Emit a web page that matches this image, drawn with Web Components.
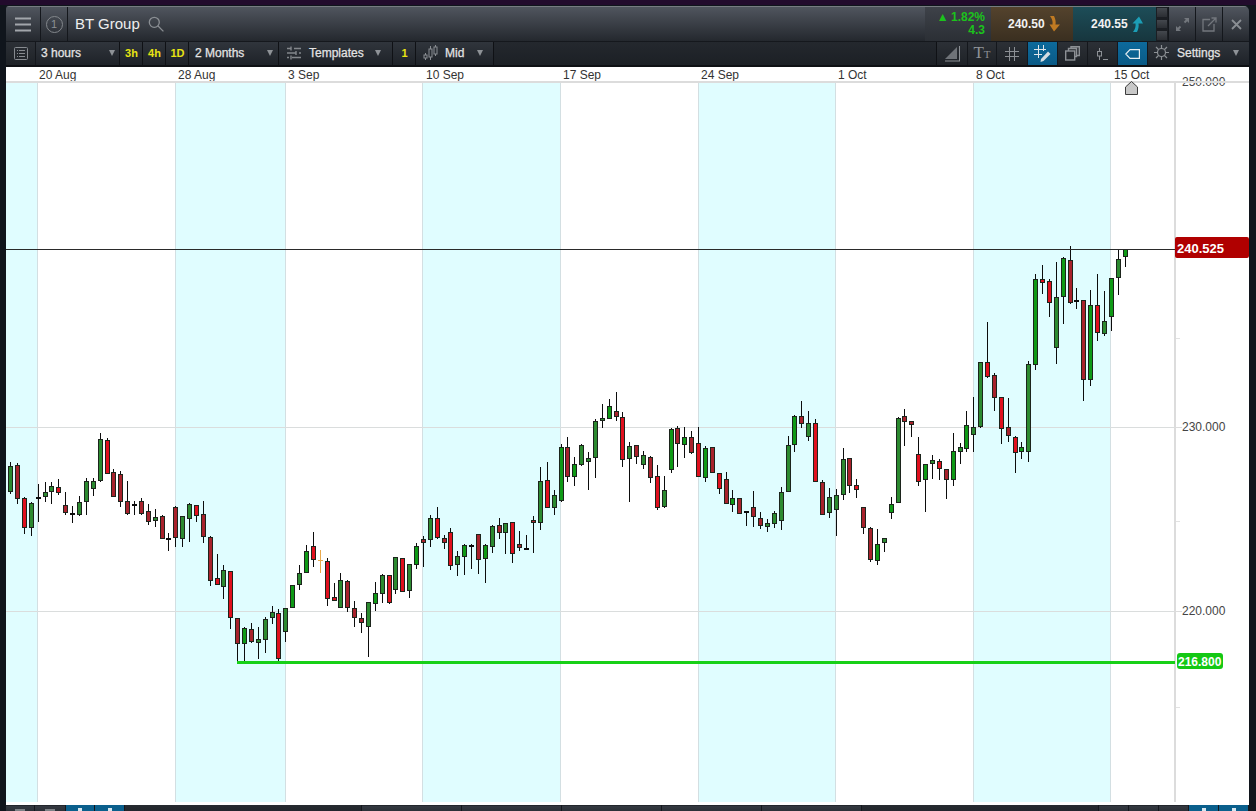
<!DOCTYPE html>
<html>
<head>
<meta charset="utf-8">
<title>BT Group</title>
<style>
  html, body { margin: 0; height: 100%; overflow: hidden; background: #10151c; }
  body { font-family: "Liberation Sans", Arial, sans-serif; display: flex; flex-direction: column; }
  .edge { height: 5px; flex: none; background: #220b2c; }
  chart-window { flex: 1; min-height: 0; }
</style>
</head>
<body>
<div class="edge"></div>
<chart-window>
  <title-bar slot="title" name="BT Group"></title-bar>
  <chart-toolbar slot="tools"></chart-toolbar>
  <candle-chart slot="chart"></candle-chart>
  <status-strip slot="status"></status-strip>
</chart-window>

<script>
class ChartWindow extends HTMLElement {
  constructor() {
    super();
    this.attachShadow({ mode: 'open' });
    this.shadowRoot.innerHTML = `
      <style>
        :host { display: flex; flex-direction: column; margin: 1px 7px 0 6px; overflow: hidden; border-radius: 3px 5px 0 0; }
      </style>
      <slot name="title"></slot>
      <slot name="tools"></slot>
      <slot name="chart"></slot>
      <slot name="status"></slot>
    `;
  }
}

class IconCell extends HTMLElement {
  constructor() {
    super();
    this.attachShadow({ mode: 'open' });
    this.shadowRoot.innerHTML = `
      <style>
        :host {
          display: flex;
          flex: none;
          align-items: center;
          justify-content: center;
          box-sizing: border-box;
          height: 100%;
          width: var(--w, 30px);
          border-right: 1px solid #14171c;
        }
        :host([active]) {
          background: linear-gradient(#0d6a9c, #0a5a86);
        }
      </style>
      <slot></slot>
    `;
  }
}

class TitleBar extends HTMLElement {
  constructor() {
    super();
    this.attachShadow({ mode: 'open' });
  }

  connectedCallback() {
    this.shadowRoot.innerHTML = `
      <style>
        :host {
          display: flex;
          align-items: stretch;
          height: 36px;
          box-sizing: border-box;
          border-top: 1px solid #767b80;
          border-bottom: 1px solid #15181d;
          background: linear-gradient(#50555e, #24282e);
          color: #eee;
        }
        .name { font-size: 15px; margin: 0 0 2px 7px; align-self: center; }
        .search { margin: 0 0 1px 8px; align-self: center; }
        .spacer { flex: 1; }
        .circle {
          width: 17px; height: 17px; border: 1.5px solid #83878c; border-radius: 50%;
          box-sizing: border-box; display: flex; align-items: center; justify-content: center;
          font-size: 11px; color: #8c9095;
        }
        .change {
          width: 66px; box-sizing: border-box; padding: 4px 6px 0 0; text-align: right;
          font-size: 12px; font-weight: 700; line-height: 13px; color: #1cc21c;
          background: linear-gradient(#3e4249, #2b2f35);
        }
        .change i { font-style: normal; font-size: 12px; margin-right: -1px; }
        .quote {
          display: flex; align-items: center; gap: 3px; box-sizing: border-box;
          font-size: 12px; font-weight: 700; color: #f2f2f2;
        }
        .sell { width: 82px; padding-left: 17px; background: linear-gradient(#54432d, #3a2f20); }
        .buy { width: 83px; padding-left: 18px; background: linear-gradient(#1d4d58, #17363e); }
        .grip {
          width: 12px; display: grid; grid-template-rows: repeat(3, 1fr); gap: 1px;
          background: #1b1e23; border-right: 1px solid #14171c;
        }
        .grip b { background: linear-gradient(#44484e, #2b2e33); margin: 1px; }
      </style>
      <icon-cell style="--w:35px">
        <svg width="16" height="15" viewBox="0 0 16 15"><path d="M0 1.500h16M0 7.500h16M0 13.500h16" stroke="#a2a6ab" stroke-width="2"/></svg>
      </icon-cell>
      <icon-cell style="--w:27px"><span class="circle">1</span></icon-cell>
      <span class="name">${this.getAttribute('name')}</span>
      <svg class="search" width="16" height="16" viewBox="0 0 16 16" fill="none" stroke="#8a8e93" stroke-width="1.300">
        <circle cx="6.300" cy="6.300" r="5"/><path d="M9.800 9.800l5.600 5.600"/>
      </svg>
      <span class="spacer"></span>
      <div class="change"><i>▲</i> 1.82%<br>4.3</div>
      <div class="quote sell">240.50
        <svg width="13" height="16" viewBox="0 0 13 16"><path d="M2 0h4c1.500 3 2 6 1.500 8.500H12L6 15.500 1.500 8.500h3C5 5.500 4 2.500 2 0z" fill="#c07a22"/></svg>
      </div>
      <div class="quote buy">240.55
        <svg width="13" height="16" viewBox="0 0 13 16"><path d="M2 16h4c1.500-3 2-6 1.500-8.500H12L8 .5 1.500 7.500h3C5 10.500 4 13.500 2 16z" fill="#1c9eb6"/></svg>
      </div>
      <div class="grip"><b></b><b></b><b></b></div>
      <icon-cell style="--w:27px">
        <svg width="13" height="13" viewBox="0 0 13 13" fill="#73777d"><path d="M8 0h5v5l-1.800-1.800-2 2-1.400-1.400 2-2zM0 8l1.800 1.800 2-2 1.400 1.400-2 2L5 13H0z"/></svg>
      </icon-cell>
      <icon-cell style="--w:27px">
        <svg width="15" height="15" viewBox="0 0 15 15" fill="none" stroke="#73777d" stroke-width="1.300"><path d="M8 2.500H1v11.500h11V7"/><path d="M6 9l7.500-7.500M9.500 1H14v4.500"/></svg>
      </icon-cell>
      <icon-cell style="--w:26px;border:none">
        <svg width="11" height="11" viewBox="0 0 11 11"><path d="M1 1l9 9M10 1l-9 9" stroke="#8a8e93" stroke-width="1.800"/></svg>
      </icon-cell>
    `;
  }
}

class ToolItem extends HTMLElement {
  constructor() {
    super();
    this.attachShadow({ mode: 'open' });
    this.shadowRoot.innerHTML = `
      <style>
        :host {
          display: flex;
          flex: none;
          align-items: center;
          box-sizing: border-box;
          height: 100%;
          width: var(--w, 80px);
          padding: 0 0 2px var(--pad, 5px);
          gap: var(--gap, 7px);
          font-size: 12px;
          color: #e4e4e4;
          -webkit-text-stroke: 0.25px #e4e4e4;
          background: linear-gradient(#30353c, #1e2228);
          border-right: 1px solid #0f1115;
        }
        .arrow {
          margin-left: auto; margin-right: var(--am, 10px);
          width: 0; height: 0;
          border-left: 3.500px solid transparent;
          border-right: 3.500px solid transparent;
          border-top: 6px solid #8e9297;
        }
        :host([plain]) .arrow { display: none; }
      </style>
      <slot></slot>
      <span class="arrow"></span>
    `;
  }
}

class ChartToolbar extends HTMLElement {
  constructor() {
    super();
    this.attachShadow({ mode: 'open' });
    this.shadowRoot.innerHTML = `
      <style>
        :host {
          display: flex;
          align-items: stretch;
          height: 25px;
          box-sizing: border-box;
          border-bottom: 2px solid #0e1014;
          background: linear-gradient(#24282e, #1c2025);
        }
        tool-item.y {
          justify-content: center; padding: 0 0 2px 1px; color: #e8e413;
          font-size: 11px; font-weight: 700; -webkit-text-stroke: 0;
        }
        icon-cell { background: linear-gradient(#2c3036, #1e2227); }
        icon-cell[active] { background: linear-gradient(#0d6a9c, #0a5a86); }
        .spacer { flex: 1; border-right: 1px solid #0f1115; }
        .tt { font-family: "Liberation Serif", serif; color: #8f9398; font-size: 17px; line-height: 1; margin-bottom: 2px; }
        .tt small { font-size: 11px; }
      </style>
      <icon-cell style="--w:30px;background:linear-gradient(#2c3036,#1e2227)">
        <svg width="14" height="14" viewBox="0 0 14 14" fill="none" stroke="#878b90">
          <rect x=".5" y=".5" width="13" height="12" rx="1"/>
          <path d="M3 3.500h1M5 3.500h6M3 6.500h1M5 6.500h6M3 9.500h1M5 9.500h6"/>
        </svg>
      </icon-cell>
      <tool-item style="--w:84px;--am:4px">3 hours</tool-item>
      <tool-item class="y" plain style="--w:23px">3h</tool-item>
      <tool-item class="y" plain style="--w:23px">4h</tool-item>
      <tool-item class="y" plain style="--w:23px">1D</tool-item>
      <tool-item style="--w:90px;--pad:6px;--am:5px">2 Months</tool-item>
      <tool-item style="--w:114px;--pad:8px;--gap:8px;--am:11px">
        <svg width="14" height="14" viewBox="0 0 14 14" stroke="#83878c" stroke-width="1.400" fill="none"><path d="M0 2.500h4M7 2.500h7M4 .5v4M0 7h9M12 7h2M9 5v4M0 11.500h2M5 11.500h9M4 9.500v4"/></svg>
        Templates
      </tool-item>
      <tool-item class="y" plain style="--w:23px">1</tool-item>
      <tool-item style="--w:78px;--pad:7px">
        <svg width="15" height="15" viewBox="0 0 15 15" fill="none" stroke="#8a8e93"><path d="M2.500 8v2M2.500 13v2M7.500 1v3M7.500 12v3M12.500 0v2M12.500 9v2"/><rect x="1" y="10" width="3" height="3"/><rect x="6" y="4" width="3" height="8"/><rect x="11" y="2" width="3" height="7"/></svg>
        <span>Mid</span>
      </tool-item>
      <span class="spacer"></span>
      <icon-cell style="--w:31px">
        <svg width="15" height="16" viewBox="0 0 15 16"><path d="M0 13L12 1v12z" fill="#6f7378"/><path d="M0 15h15M14.500 0v15" stroke="#8c9095" fill="none"/></svg>
      </icon-cell>
      <icon-cell style="--w:29px"><span class="tt">T<small>T</small></span></icon-cell>
      <icon-cell style="--w:31px">
        <svg width="14" height="14" viewBox="0 0 14 14"><path d="M0 4.500h14M0 9.500h14M4.500 0v14M9.500 0v14" stroke="#8c9095"/></svg>
      </icon-cell>
      <icon-cell active style="--w:30px">
        <svg width="18" height="17" viewBox="0 0 18 17"><path d="M0 4.500h12M0 9.500h8M4.500 0v13M9.500 0v6" stroke="#dfe6ea"/><path d="M7 14l-.5 3 3-1 7-7-2.500-2.500z" fill="#d4dde2"/></svg>
      </icon-cell>
      <icon-cell style="--w:30px">
        <svg width="15" height="15" viewBox="0 0 15 15" fill="none" stroke="#8c9095" stroke-width="1.400"><rect x=".7" y="5" width="9" height="9"/><path d="M3.500 5V2.500h8v8H10M6 2.500V.7h8.300v8.800H11.500"/></svg>
      </icon-cell>
      <icon-cell style="--w:30px">
        <svg width="11" height="12" viewBox="0 0 11 12" fill="none" stroke="#8c9095"><path d="M2.500 0v3.500M2.500 8v4M6 11.500h5"/><rect x=".5" y="3.500" width="4" height="4.500"/></svg>
      </icon-cell>
      <icon-cell active style="--w:30px">
        <svg width="15" height="10" viewBox="0 0 15 10" fill="none" stroke="#e6edf1" stroke-width="1.200"><path d="M5 .6h9.400v8.800H5L.8 5z"/></svg>
      </icon-cell>
      <tool-item style="--w:101px;--pad:6px;--gap:8px;border:none">
        <svg width="15" height="15" viewBox="0 0 15 15" fill="none" stroke="#8c9095" stroke-width="1.200"><circle cx="7.500" cy="7.500" r="4"/><path d="M7.500 0v3M7.500 12v3M0 7.500h3M12 7.500h3M2 2l2.500 2.500M10.500 10.500L13 13M2 13l2.500-2.500M10.500 4.500L13 2"/></svg>
        Settings
      </tool-item>
    `;
  }
}

// rows are read off in groups: [wickTop, bodyTop, bodyBottom, wickBottom, colour]
// values are 3x from the group's base y. r/g bright, R/G dull, k doji, o orange
const CANDLE_GROUPS = [
  { base: 420, rows: [
    [126,138,215,222,'G'],[130,136,236,251,'R'],[232,235,323,341,'r'],[245,250,323,347,'G'],
    [192,232,236,305,'k'],[186,217,230,246,'G'],[186,198,215,251,'G'],[178,202,218,224,'r'],
    [216,255,278,284,'R'],[258,280,284,308,'k'],[228,247,285,287,'G'],[175,184,245,284,'G'],
    [175,184,206,228,'G'],[40,58,182,185,'G'],[54,60,161,161,'r'],[148,157,230,230,'R'],
    [154,162,245,260,'R'],[183,244,281,284,'R'],[243,253,257,284,'k'],[235,244,281,284,'R'],
    [252,274,305,315,'R'],[267,292,303,320,'G'],[286,288,356,356,'R'],[339,355,358,392,'k'],
    [258,262,353,381,'R'],[289,289,356,381,'G'],[250,253,296,365,'G'],[255,256,287,305,'r'],
    [243,281,350,368,'R'],[348,352,482,497,'R'],[403,475,494,494,'r'],[435,451,500,536,'G'],
    [454,454,593,626,'r'],[595,595,671,725,'R'],[620,625,673,725,'g'],[610,628,666,668,'R'],
    [622,658,668,718,'G'],[592,598,659,698,'G'],[559,577,593,611,'G'],[568,580,716,722,'r'],
  ] },
  { base: 480, rows: [
    [385,385,455,485,'G'],[315,315,385,385,'g'],[255,280,314,329,'G'],[195,214,278,278,'g'],
    [156,198,239,260,'r'],[210,241,243,279,'o'],[235,244,356,378,'r'],[309,352,362,362,'r'],
    [280,301,383,383,'G'],[300,303,383,395,'R'],[363,385,413,440,'R'],[399,415,428,458,'R'],
    [367,367,440,530,'G'],[306,340,371,392,'g'],[283,286,341,368,'G'],[285,286,369,371,'r'],
    [232,232,329,342,'G'],[233,235,335,335,'r'],[253,253,332,353,'G'],[190,198,254,267,'g'],
    [168,178,188,261,'R'],[106,114,181,200,'G'],[81,114,174,176,'r'],[166,175,188,207,'R'],
    [145,156,257,269,'r'],[213,229,254,287,'G'],[193,196,230,285,'g'],[193,196,199,266,'k'],
    [163,163,241,282,'R'],[193,194,238,308,'g'],[136,139,200,218,'G'],[114,136,160,176,'R'],
    [128,129,160,221,'G'],[127,127,221,248,'r'],[153,193,203,212,'R'],[165,203,206,206,'k'],
    [109,121,128,218,'R'],[-39,3,130,150,'G'],[-54,0,85,85,'r'],
  ] },
  { base: 385, rows: [
    [315,331,368,389,'G'],[178,187,347,350,'g'],[157,187,275,290,'R'],[216,238,275,302,'g'],
    [178,181,239,242,'G'],[201,220,230,314,'G'],[103,109,218,278,'G'],[57,100,107,128,'G'],
    [42,64,101,101,'g'],[21,79,95,107,'R'],[82,97,224,245,'r'],[172,184,221,350,'G'],
    [181,181,215,236,'R'],[198,211,239,251,'G'],[214,216,278,293,'R'],[240,274,369,374,'r'],
    [273,316,366,368,'G'],[129,132,254,263,'g'],[124,130,176,245,'R'],[126,157,179,219,'g'],
    [138,157,204,206,'R'],[126,175,275,277,'r'],[183,190,278,290,'g'],[185,187,263,263,'R'],
    [265,265,311,326,'r'],[262,283,356,356,'R'],[315,339,359,380,'g'],[340,340,386,388,'R'],
    [377,379,382,423,'k'],[319,367,397,425,'R'],[381,400,422,431,'R'],[403,415,425,440,'G'],
    [379,385,418,429,'G'],[307,322,409,434,'G'],[153,181,320,320,'G'],[91,93,181,200,'g'],
    [48,94,118,128,'R'],[79,115,157,169,'G'],[103,115,290,290,'r'],[286,292,389,389,'R'],
    [310,337,383,398,'G'],
  ] },
  { base: 390, rows: [
    [298,316,361,437,'G'],[175,208,314,329,'G'],[205,205,287,308,'R'],[267,286,299,323,'r'],
    [352,352,413,431,'R'],[411,414,509,517,'R'],[417,463,512,524,'g'],[444,445,460,486,'G'],
    [321,343,368,386,'g'],[82,85,340,340,'G'],[57,79,95,167,'R'],[93,94,104,140,'R'],
    [141,193,275,287,'r'],[223,223,271,365,'g'],[195,211,221,266,'G'],[207,214,236,269,'r'],
    [238,238,269,326,'R'],[129,184,271,287,'g'],[159,172,185,221,'G'],[64,106,176,185,'g'],
    [21,112,134,185,'G'],
  ] },
  { base: 235, rows: [
    [380,380,577,580,'G'],[262,381,427,430,'r'],[415,421,490,527,'R'],[487,487,581,627,'r'],
    [490,576,602,620,'R'],[603,606,653,713,'r'],[621,637,650,671,'g'],[379,388,650,681,'G'],
    [118,133,391,404,'g'],[90,133,143,176,'r'],[133,138,203,245,'r'],[82,187,338,386,'G'],
    [65,69,185,266,'g'],[34,76,203,208,'R'],[160,196,200,223,'k'],[196,196,434,497,'R'],
    [166,211,434,452,'g'],[117,211,293,317,'r'],[168,259,296,302,'G'],[128,130,245,287,'g'],
    [44,73,130,179,'G'],[42,42,67,95,'g'],
  ] },
];

const CANDLE_COLOURS = { r: '#e0101e', R: '#a8222c', g: '#0f9a16', G: '#2c8a30' };

class CandleChart extends HTMLElement {
  constructor() {
    super();
    this.attachShadow({ mode: 'open' });
  }

  candles() {
    let out = '';
    let i = 0;
    CANDLE_GROUPS.forEach(({ base, rows }) => {
      const py = (v) => Math.round(base + v / 3);
      rows.forEach(([wt, bt, bb, wb, col]) => {
        const x = Math.round(10.2 + 6.879 * i);
        i++;
        const wick = col === 'o' ? '#e9a94c' : '#0c0c0c';
        out += `<rect x="${x}" y="${py(wt)}" width="1" height="${py(wb) - py(wt)}" fill="${wick}"/>`;
        if (col === 'k' || col === 'o') {
          out += `<rect x="${x - 2}" y="${py(bt)}" width="5" height="${col === 'k' ? 2 : 1}" fill="${wick}"/>`;
        } else {
          const h = Math.max(py(bb) - py(bt), 3);
          out += `<rect x="${x - 2}" y="${py(bt)}" width="5" height="${h}" fill="#1c241c"/>`;
          out += `<rect x="${x - 1}" y="${py(bt) + 1}" width="3" height="${h - 2}" fill="${CANDLE_COLOURS[col]}"/>`;
        }
      });
    });
    return out;
  }

  connectedCallback() {
    const bands = [[6, 37], [175, 285], [422, 560], [698, 835], [973, 1110]];
    const weeks = [37, 175, 285, 422, 560, 698, 835, 973, 1110];
    const dates = [[39, '20 Aug'], [178, '28 Aug'], [288, '3 Sep'], [426, '10 Sep'], [563, '17 Sep'],
      [701, '24 Sep'], [838, '1 Oct'], [976, '8 Oct'], [1114, '15 Oct']];
    const prices = [[86, '250.000'], [431, '230.000'], [615, '220.000']];
    this.shadowRoot.innerHTML = `
      <style>
        :host { display: block; height: 738px; background: #fff; }
        svg { display: block; font-family: "Liberation Sans", Arial, sans-serif; font-size: 12px; }
        .lines rect { shape-rendering: crispEdges; }
        .candles { shape-rendering: crispEdges; }
      </style>
      <svg width="1243" height="738" viewBox="6 67 1243 738">
        <g class="lines">
          ${bands.map(([a, b]) => `<rect x="${a}" y="82" width="${b - a}" height="720" fill="#e0fdff"/>`).join('')}
          ${weeks.map((x) => `<rect x="${x}" y="82" width="1" height="720" fill="#d3dfe2"/>`).join('')}
          <rect x="6" y="427" width="1169" height="1" fill="#dadddd"/>
          <rect x="6" y="611" width="1169" height="1" fill="#dadddd"/>
          <rect x="1174" y="82" width="2" height="720" fill="#dcdcdc"/>
          <rect x="1176" y="338" width="4" height="1" fill="#e2e2e2"/>
          <rect x="1176" y="521" width="4" height="1" fill="#e2e2e2"/>
          <rect x="1176" y="707" width="4" height="1" fill="#e2e2e2"/>
          <rect x="1176" y="427" width="6" height="1" fill="#dcdcdc"/>
          <rect x="1176" y="611" width="6" height="1" fill="#dcdcdc"/>
        </g>
        ${dates.map(([x, t]) => `<text x="${x}" y="79" fill="#333">${t}</text>`).join('')}
        ${prices.map(([y, t]) => `<text x="1182" y="${y}" fill="#444">${t}</text>`).join('')}
        <rect x="6" y="81" width="1243" height="2" fill="#dcdcdc" shape-rendering="crispEdges"/>
        <path d="M1125.500 94.500v-7.500l6-5.500 6 5.500v7.500z" fill="#c8c8c8" stroke="#3c3c3c"/>
        <g class="candles">${this.candles()}</g>
        <rect x="6" y="249" width="1169" height="1" fill="#2a2a2a" shape-rendering="crispEdges"/>
        <rect x="237" y="661" width="938" height="3" fill="#17d017" shape-rendering="crispEdges"/>
        <rect x="1175" y="237" width="74" height="21" rx="2" fill="#b00000"/>
        <text x="1177" y="253" fill="#fff" font-size="13" font-weight="700">240.525</text>
        <rect x="1177" y="653" width="46" height="16" rx="3" fill="#14c814"/>
        <text x="1178" y="665.500" fill="#fff" font-size="12" font-weight="700">216.800</text>
      </svg>
    `;
  }
}

class StatusStrip extends HTMLElement {
  constructor() {
    super();
    this.attachShadow({ mode: 'open' });
    this.shadowRoot.innerHTML = `
      <style>
        :host {
          display: flex;
          align-items: stretch;
          height: 6px;
          overflow: hidden;
          background: linear-gradient(#353a42, #2b3037);
          box-shadow: inset 0 1px #22262c;
        }
        span { flex: none; box-sizing: border-box; border-right: 1px solid #14171c; position: relative; }
        .blue { background: #0a5f8c; }
        .blue::after {
          content: ""; position: absolute; left: calc(50% - 2px); top: 3px; width: 4px; height: 3px; background: #d7e6ee;
        }
        .tip::after {
          content: ""; position: absolute; left: calc(50% - 5px); top: 4px; width: 10px; height: 2px; background: #7d8186;
        }
        .gap { flex: 1; }
        .dim { background: linear-gradient(#262a30, #22262c); }
      </style>
      <span class="tip" style="width:29px"></span>
      <span class="tip" style="width:31px"></span>
      <span class="blue" style="width:29px"></span>
      <span class="blue" style="width:30px"></span>
      <span class="dim" style="width:237px"></span>
      <span style="width:100px"></span>
      <span style="width:100px"></span>
      <span style="width:100px"></span>
      <span style="width:100px"></span>
      <span style="width:100px"></span>
      <span class="dim gap"></span>
      <span style="width:30px"></span>
      <span style="width:30px"></span>
      <span style="width:30px"></span>
      <span class="blue" style="width:30px"></span>
      <span class="blue" style="width:30px"></span>
    `;
  }
}

customElements.define('icon-cell', IconCell);
customElements.define('tool-item', ToolItem);
customElements.define('title-bar', TitleBar);
customElements.define('chart-toolbar', ChartToolbar);
customElements.define('candle-chart', CandleChart);
customElements.define('status-strip', StatusStrip);
customElements.define('chart-window', ChartWindow);
</script>
</body>
</html>
